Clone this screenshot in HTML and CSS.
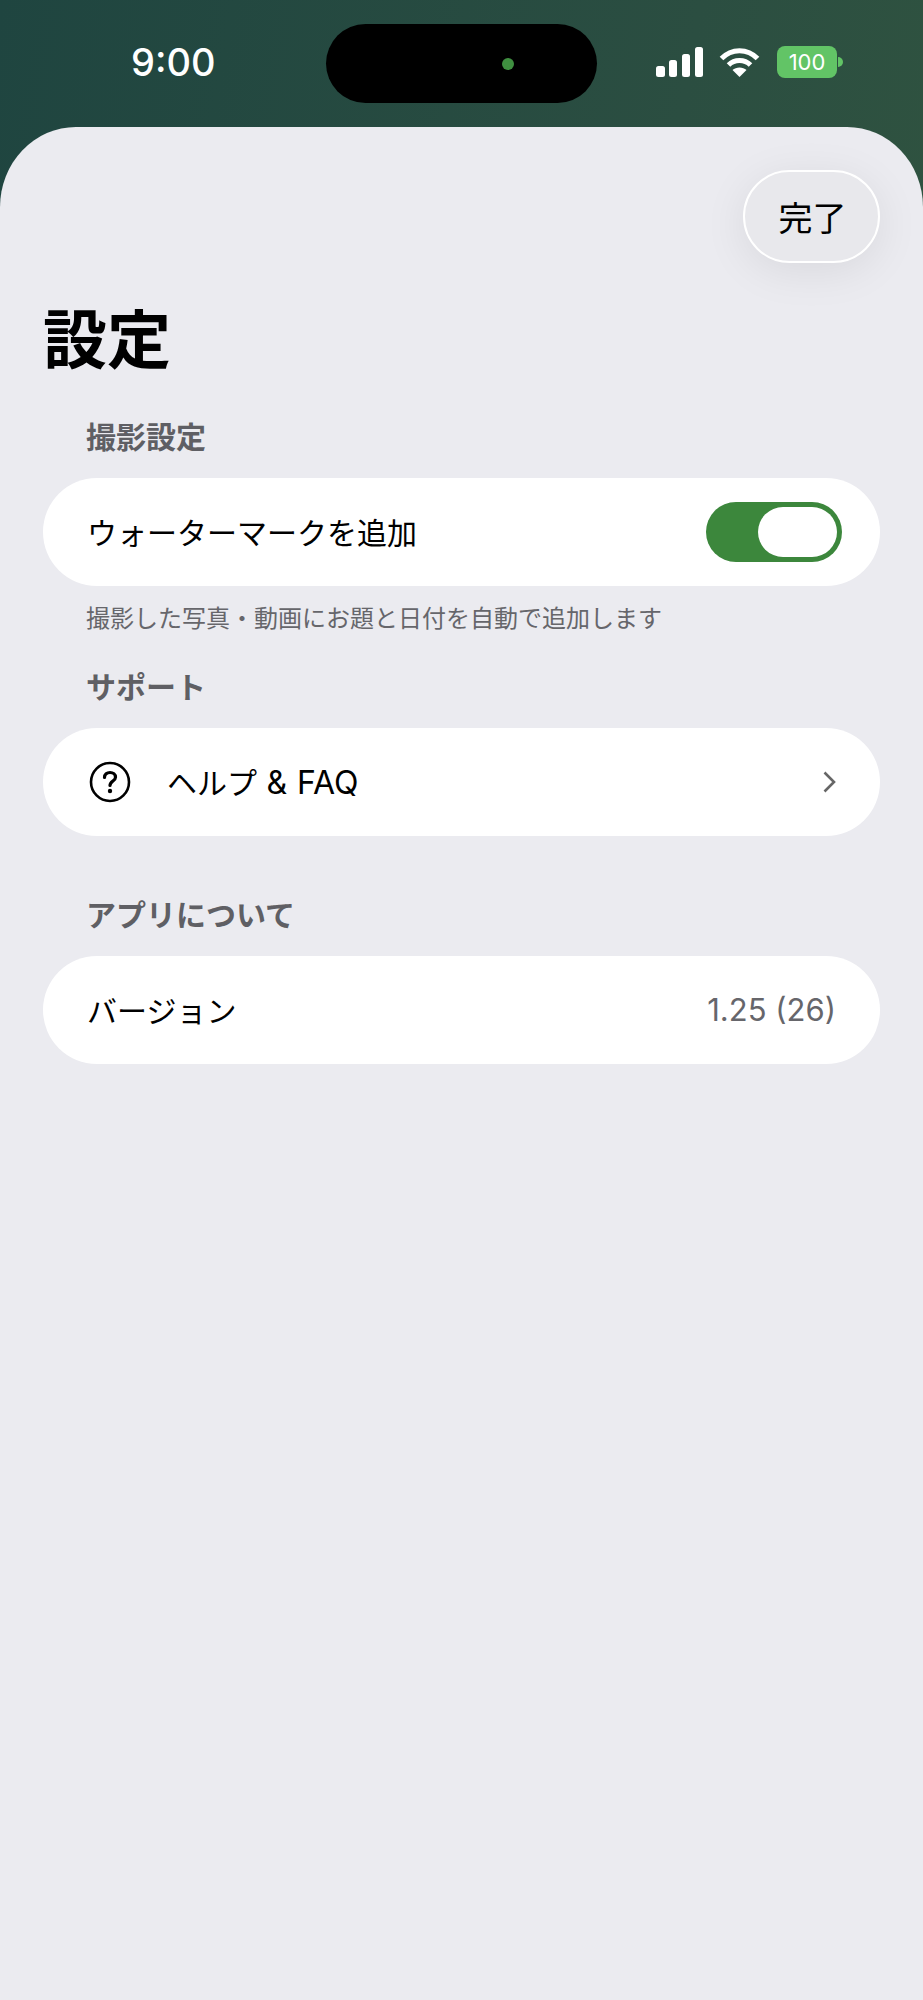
FILE: index.html
```html
<!DOCTYPE html>
<html lang="ja">
<head>
    <meta charset="UTF-8">
    <title>設定</title>
    <link rel="stylesheet" href="styles.css">
</head>
<body>
    <header class="status-bar">
        <div class="time">9:00</div>
        <div class="island"><span class="island-dot"></span></div>
        <div class="status-icons">
            <svg class="signal" width="47" height="30" viewBox="0 0 47 30">
                <rect x="0" y="19" width="9" height="11" rx="2.5" fill="#fff"/>
                <rect x="13" y="13" width="8" height="17" rx="2.5" fill="#fff"/>
                <rect x="26" y="7" width="8" height="23" rx="2.5" fill="#fff"/>
                <rect x="39" y="0" width="8" height="30" rx="2.5" fill="#fff"/>
            </svg>
            <svg class="wifi" width="41" height="30" viewBox="0 0 41 30" fill="none" stroke="#fff" stroke-width="5">
                <path d="M2.5 11.5C12.5 1 28.500 1 38.500 11.500"/>
                <path d="M9.500 18C15.500 12 25.500 12 31.500 18"/>
                <path d="M20.500 30L13.500 23C17 19.500 24 19.500 27.500 23Z" fill="#fff" stroke="none"/>
            </svg>
            <div class="battery">
                <span class="battery-body">100</span>
                <span class="battery-nub"></span>
            </div>
        </div>
    </header>

    <main class="sheet">
        <div class="sheet-top">
            <button class="done-btn">完了</button>
        </div>
        <h1 class="title">設定</h1>

        <section class="group group-shoot">
            <h2 class="group-title">撮影設定</h2>
            <div class="row">
                <span class="row-label">ウォーターマークを追加</span>
                <div class="toggle"><span class="toggle-knob"></span></div>
            </div>
            <p class="group-note">撮影した写真・動画にお題と日付を自動で追加します</p>
        </section>

        <section class="group group-support">
            <h2 class="group-title">サポート</h2>
            <div class="row">
                <svg class="help-icon" width="42" height="42" viewBox="0 0 42 42" fill="none" stroke="#000" stroke-width="2.600">
                    <circle cx="21" cy="21" r="19"/>
                    <path d="M15.500 16.500C15.500 13.300 18 11.500 21 11.500C24 11.500 26.500 13.300 26.500 16.200C26.500 20 21 20 21 24.500" stroke-width="3.200" stroke-linecap="round"/>
                    <circle cx="21" cy="30" r="2.200" fill="#000" stroke="none"/>
                </svg>
                <span class="row-label">ヘルプ <span class="latin">&amp; FAQ</span></span>
                <svg class="chevron" width="13" height="22" viewBox="0 0 13 22" fill="none" stroke="#666" stroke-width="2.600">
                    <path d="M1.500 1.500L11 11L1.500 20.500"/>
                </svg>
            </div>
        </section>

        <section class="group group-about">
            <h2 class="group-title">アプリについて</h2>
            <div class="row">
                <span class="row-label">バージョン</span>
                <span class="row-value">1.25 (26)</span>
            </div>
        </section>
    </main>
</body>
</html>
```

FILE: styles.css
```css
body {
    margin: 0;
    height: 2000px;
    overflow: hidden;
    font-family: Inter, "Noto Sans CJK JP", sans-serif;
    background: linear-gradient(100deg, #1f4540 0%, #2b4e41 55%, #33573f 100%);
    color: #000;
}
.status-bar {
    height: 127px;
    box-sizing: border-box;
    padding: 24px 79px 0 131px;
    display: flex;
    align-items: flex-start;
}
.time {
    width: 195px;
    height: 79px;
    line-height: 76px;
    font-size: 38px;
    font-weight: 500;
    color: #fff;
}
.island {
    width: 271px;
    height: 79px;
    border-radius: 40px;
    background: #000;
    display: flex;
    align-items: center;
    justify-content: flex-end;
    padding-right: 83px;
    box-sizing: border-box;
}
.island-dot {
    width: 12px;
    height: 12px;
    border-radius: 50%;
    background: #3f8f40;
}
.status-icons {
    display: flex;
    align-items: flex-start;
    margin-left: 59px;
    padding-top: 23px;
}
.wifi {
    margin-left: 16px;
}
.battery {
    display: flex;
    align-items: center;
    margin-left: 17px;
    margin-top: -1px;
}
.battery-body {
    width: 60px;
    height: 32px;
    line-height: 32px;
    border-radius: 8px;
    background: #62c466;
    color: #fff;
    font-size: 22px;
    text-align: center;
}
.battery-nub {
    width: 5px;
    height: 10px;
    margin-left: 1px;
    border-radius: 0 5px 5px 0;
    background: #62c466;
}
.sheet {
    height: 1873px;
    box-sizing: border-box;
    padding: 43px 43px 0;
    background: #ebebf0;
    border-radius: 76px 76px 0 0 / 80px 80px 0 0;
}
.sheet-top {
    display: flex;
    justify-content: flex-end;
}
.done-btn {
    width: 137px;
    height: 93px;
    box-sizing: border-box;
    border: 2px solid #fff;
    border-radius: 47px;
    background: #e8e8ec;
    box-shadow: 0 8px 44px rgba(0,0,0,0.08);
    font-family: inherit;
    font-size: 34px;
    color: #000;
    padding: 0 0 0 2px;
}
.title {
    margin: 42px 0 0;
    font-size: 64px;
    line-height: 70px;
    font-weight: 700;
}
.group-title {
    margin: 0 0 21px 43px;
    font-size: 30px;
    line-height: 40px;
    font-weight: 700;
    color: #5f5f64;
}
.group-shoot {
    margin-top: 42px;
}
.group-support {
    margin-top: 32px;
}
.group-about {
    margin-top: 59px;
}
.row {
    height: 108px;
    box-sizing: border-box;
    padding: 0 44px;
    border-radius: 54px;
    background: #fff;
    display: flex;
    align-items: center;
    justify-content: space-between;
}
.row-label {
    font-size: 30px;
    padding-bottom: 3px;
}
.row-value {
    font-size: 31px;
    color: #66666b;
    padding-bottom: 2px;
}
.group-support .row-label {
    margin-left: 36px;
    margin-right: auto;
    word-spacing: 1px;
}
.latin {
    font-size: 32px;
}
.group-support .row {
    padding-left: 46px;
    padding-right: 44px;
}
.group-note {
    margin: 17px 0 0 43px;
    font-size: 24px;
    line-height: 32px;
    color: #66666b;
}
.toggle {
    width: 136px;
    height: 60px;
    margin-right: -6px;
    box-sizing: border-box;
    padding: 5px;
    border-radius: 30px;
    background: #3c873c;
    display: flex;
    justify-content: flex-end;
}
.toggle-knob {
    width: 79px;
    height: 50px;
    border-radius: 25px;
    background: #fff;
}
```
